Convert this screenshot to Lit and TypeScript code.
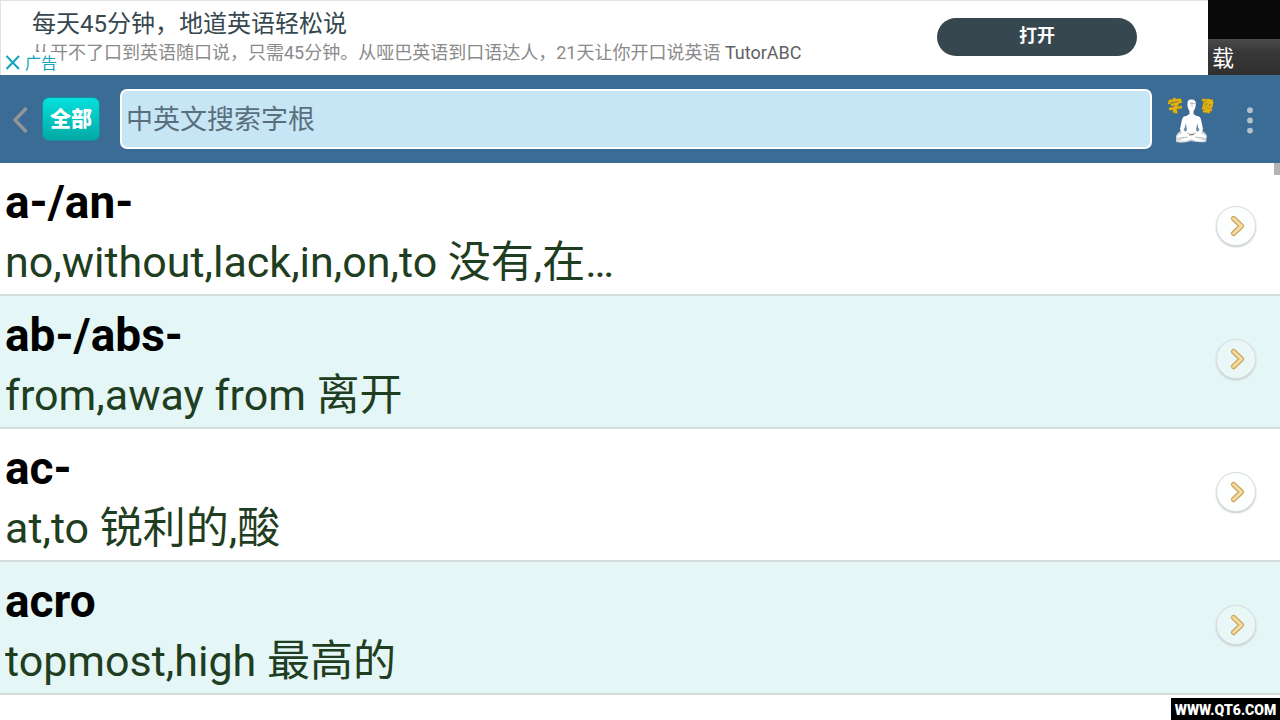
import { LitElement, html, css } from "lit";
import { customElement, property } from "lit/decorators.js";

interface Root {
  name: string;
  meaning: string;
}

const ROOTS: Root[] = [
  { name: "a-/an-", meaning: "no,without,lack,in,on,to 没有,在…" },
  { name: "ab-/abs-", meaning: "from,away from 离开" },
  { name: "ac-", meaning: "at,to 锐利的,酸" },
  { name: "acro", meaning: "topmost,high 最高的" },
];

@customElement("ad-banner")
class AdBanner extends LitElement {
  static styles = css`
    :host {
      display: flex;
      height: 75px;
      background: #0a0a0a;
    }
    .ad {
      position: relative;
      flex: 1;
      min-width: 0;
      box-sizing: border-box;
      display: flex;
      align-items: flex-start;
      justify-content: space-between;
      background: #fff;
      border-top: 1px solid #e2e2e2;
      border-left: 1px solid #e2e2e2;
      padding: 8px 71px 0 31px;
    }
    .copy {
      white-space: nowrap;
    }
    .title {
      margin: 0;
      font-size: 24px;
      line-height: 30px;
      font-weight: 400;
      color: #37474f;
    }
    .sub {
      margin: 0;
      font-size: 18px;
      line-height: 28px;
      color: #8a8a8a;
    }
    .brand {
      color: #5f6163;
    }
    .open {
      width: 200px;
      height: 38px;
      margin-top: 9px;
      padding: 0 0 2px;
      border: 0;
      border-radius: 19px;
      background: #37474f;
      color: #fff;
      font: 700 18px/36px Roboto, "Noto Sans CJK SC", sans-serif;
    }
    .tag {
      position: absolute;
      left: 0;
      bottom: 0;
      display: flex;
      align-items: center;
      gap: 4px;
      height: 23px;
      padding-left: 4px;
      background: #fff;
      color: #12a5bd;
      font-size: 16px;
      line-height: 22px;
      text-decoration: none;
    }
    .tag svg {
      display: block;
    }
    .side {
      width: 72px;
      display: flex;
      flex-direction: column;
      justify-content: flex-end;
    }
    .tab {
      box-sizing: border-box;
      height: 36px;
      padding-left: 4px;
      background: linear-gradient(#4a4a4a, #373737 40%, #303030);
      color: #fff;
      font-size: 22px;
      line-height: 40px;
    }
  `;

  render() {
    return html`
      <div class="ad">
        <div class="copy">
          <p class="title">每天45分钟，地道英语轻松说</p>
          <p class="sub">从开不了口到英语随口说，只需45分钟。从哑巴英语到口语达人，21天让你开口说英语 <span class="brand">TutorABC</span></p>
        </div>
        <button class="open">打开</button>
        <a class="tag" href="#ad">
          <svg width="16" height="18" viewBox="0 0 16 18" aria-hidden="true">
            <path d="M1.500 1L14 14M14 1L1.500 14" stroke="#12a5bd" stroke-width="2" fill="none" />
          </svg>广告</a>
      </div>
      <div class="side"><div class="tab">载</div></div>
    `;
  }
}

@customElement("search-bar")
class SearchBar extends LitElement {
  static styles = css`
    :host {
      display: flex;
      align-items: center;
      height: 88px;
      background: #3a6c96;
    }
    button {
      padding: 0;
      border: 0;
      background: none;
      flex: none;
    }
    svg {
      display: block;
    }
    .back {
      margin-left: 8px;
    }
    .all {
      width: 58px;
      height: 44px;
      margin-left: 10px;
      border-radius: 7px;
      border: 1px solid #158f9c;
      background: linear-gradient(#04e0dc, #04a9a4);
      color: #fff;
      font: 900 21px/42px Roboto, "Noto Sans CJK SC", sans-serif;
    }
    .field {
      flex: 1;
      min-width: 0;
      height: 60px;
      box-sizing: border-box;
      margin: 0 15px 0 20px;
      padding: 2px 4px 0;
      border: 2px solid #fff;
      border-radius: 7px;
      background: #c7e6f5;
      color: #37474f;
      font: 400 27px/54px Roboto, "Noto Sans CJK SC", sans-serif;
    }
    .field::placeholder {
      color: #5a6f7d;
      opacity: 1;
    }
    .more {
      margin: 0 24px 0 29px;
    }
  `;

  render() {
    return html`
      <button class="back" aria-label="返回">
        <svg width="24" height="32" viewBox="0 0 24 32">
          <path d="M18.500 5L7 17L18.500 29" fill="none" stroke="#8f9599" stroke-width="3.500" />
        </svg>
      </button>
      <button class="all">全部</button>
      <input class="field" type="text" placeholder="中英文搜索字根" aria-label="中英文搜索字根" />
      <button aria-label="字禅">
        <svg width="48" height="50" viewBox="0 0 48 50">
          <g fill="none" stroke="#8c8235" stroke-width="3.600" stroke-linejoin="round">
            <path d="M2 10L3 7L13 6L14 9M7 4L8 7M4 11L11 9L8 13L9 18L6 17M2 15L15 13" />
            <path d="M35 6L46 7M38 8L37 12L44 13L45 9L38 8M42 5L40 17M35 14L45 16M36 17L43 18" />
          </g>
          <g fill="none" stroke="#e3b012" stroke-width="2.200">
            <path d="M2 10L3 7L13 6L14 9M7 4L8 7M4 11L11 9L8 13L9 18L6 17M2 15L15 13" />
            <path d="M35 6L46 7M38 8L37 12L44 13L45 9L38 8M42 5L40 17M35 14L45 16M36 17L43 18" />
          </g>
          <path d="M9 42Q11 37 17 36H32Q38 37 40 42L39 48Q32 49 24 47Q16 50 9 48Z" fill="#cfd4d8" />
          <path d="M20.500 8Q21 5 24 5.500Q29 5 28.800 10Q28.500 15 26.500 17V20Q29 22 32 22.500Q34 23.500 34.500 28L36 35L35 38L30 41H19L14 38L13 35L14.500 28Q15 23.500 17 22.500Q20 22 22.500 20V17Q20 14 20.500 8Z" fill="#fff" />
          <path d="M18.500 29L18 33L16.500 36L19 38L20 35ZM30.500 29L31 33L32.500 36L30 38L29 35Z" fill="#6c8ca8" />
          <path d="M10 42Q15 37 24 40Q34 37 39 42Q39 45 33 44.500L28 43.500L38 47Q30 48 24 45Q18 48 10 47L21 43.500L16 44.500Q10 45 10 42Z" fill="#fff" />
          <path d="M25 8V13M23 9.500H28M20 39L24 40.500L29 39M12 44L21 43M28 43L37 44" fill="none" stroke="#a9b2b9" stroke-width=".8" />
          <path d="M22 41L27 40.500" stroke="#80685e" />
        </svg>
      </button>
      <button class="more" aria-label="更多">
        <svg width="12" height="32" viewBox="0 0 12 32">
          <g fill="#b5c2cc"><circle cx="6" cy="7.200" r="2.900" /><circle cx="6" cy="17.400" r="2.900" /><circle cx="6" cy="27.600" r="2.900" /></g>
        </svg>
      </button>
    `;
  }
}

@customElement("root-row")
class RootRow extends LitElement {
  @property({ attribute: false }) root!: Root;

  static styles = css`
    :host {
      display: flex;
      align-items: center;
      justify-content: space-between;
      padding: 9px 24px 2px 5px;
      border-bottom: 2px solid #d5dcdc;
      background: #fff;
    }
    :host(:nth-child(even)) {
      background: #e4f6f6;
    }
    .text {
      min-width: 0;
    }
    .name {
      margin: 0;
      font-size: 46px;
      line-height: 60px;
      font-weight: 700;
      color: #000;
    }
    .meaning {
      margin: 0;
      font-size: 43px;
      line-height: 60px;
      color: #1f3d20;
      white-space: nowrap;
      overflow: hidden;
      text-overflow: ellipsis;
    }
    .go {
      flex: none;
      width: 40px;
      height: 40px;
      margin-bottom: 12px;
      padding: 0;
      border: 1px solid #dcdfdf;
      border-radius: 50%;
      background: #fdfefe;
      box-shadow: 0 1px 2px #c0c6c6;
    }
    :host(:nth-child(even)) .go {
      background: #e9f7f6;
    }
    svg {
      display: block;
      margin: auto;
    }
  `;

  render() {
    return html`
      <div class="text">
        <h2 class="name">${this.root.name}</h2>
        <p class="meaning">${this.root.meaning}</p>
      </div>
      <button class="go" aria-label=${this.root.name}>
        <svg width="22" height="24" viewBox="0 0 22 24" fill="none" stroke-linecap="round" stroke-linejoin="round">
          <path d="M8.500 4.500L16.500 12L8.500 19.500" stroke="#c9a760" stroke-width="5.200" />
          <path d="M8.500 4.500L16.500 12L8.500 19.500" stroke="#f8dca2" stroke-width="2.600" />
        </svg>
      </button>
    `;
  }
}

@customElement("app-root")
class AppRoot extends LitElement {
  static styles = css`
    :host {
      display: block;
      position: relative;
      min-height: 100vh;
      background: #fff;
      font-family: Roboto, "Noto Sans CJK SC", sans-serif;
    }
    .list {
      position: relative;
    }
    .thumb {
      position: absolute;
      top: 0;
      right: 0;
      width: 6px;
      height: 12px;
      background: #b4b4b4;
    }
    .mark {
      position: absolute;
      right: 0;
      bottom: 0;
      box-sizing: border-box;
      width: 109px;
      height: 22px;
      background: #000;
      color: #fff;
      font-size: 14px;
      line-height: 24px;
      font-weight: 900;
      text-align: center;
      white-space: nowrap;
    }
  `;

  render() {
    return html`
      <ad-banner></ad-banner>
      <search-bar></search-bar>
      <main class="list">
        <div>${ROOTS.map((r) => html`<root-row .root=${r}></root-row>`)}</div>
        <div class="thumb"></div>
      </main>
      <div class="mark">WWW.QT6.COM</div>
    `;
  }
}
